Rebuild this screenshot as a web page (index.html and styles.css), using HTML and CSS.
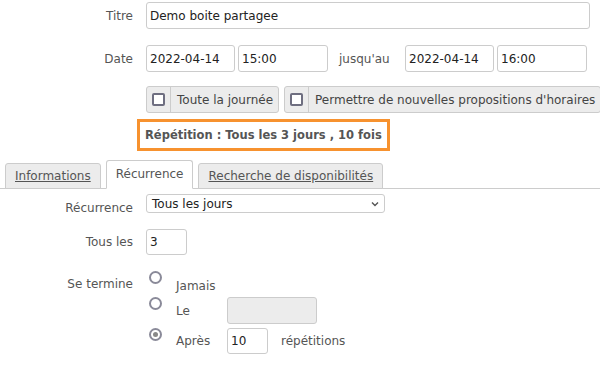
FILE: index.html
```html
<!DOCTYPE html>
<html lang="fr">
<head>
  <meta charset="UTF-8">
  <meta name="viewport" content="width=device-width, initial-scale=1.0">
  <title>Nouvel événement</title>
  <link rel="stylesheet" href="styles.css">
</head>
<body>
  <form class="event-form">
    <div class="row row-title">
      <label class="row-label" for="titre">Titre</label>
      <input class="field field-title" type="text" id="titre" value="Demo boite partagee">
    </div>

    <div class="row row-date">
      <label class="row-label">Date</label>
      <input class="field field-date" type="text" value="2022-04-14">
      <input class="field field-time" type="text" value="15:00">
      <span class="until">jusqu'au</span>
      <input class="field field-date" type="text" value="2022-04-14">
      <input class="field field-time" type="text" value="16:00">
    </div>

    <div class="row row-options">
      <span class="row-label"></span>
      <label class="check-btn">
        <span class="check-zone"><span class="check-square"></span></span>
        <span class="check-text">Toute la journée</span>
      </label>
      <label class="check-btn">
        <span class="check-zone"><span class="check-square"></span></span>
        <span class="check-text">Permettre de nouvelles propositions d'horaires</span>
      </label>
    </div>

    <div class="repeat-summary"><b>Répétition :</b> Tous les 3 jours , 10 fois</div>

    <ul class="tabs">
      <li class="tab"><a href="#">Informations</a></li>
      <li class="tab active"><span>Récurrence</span></li>
      <li class="tab"><a href="#">Recherche de disponibilités</a></li>
    </ul>

    <div class="tab-panel">
      <div class="row row-recurrence">
        <label class="row-label">Récurrence</label>
        <div class="select">
          <span>Tous les jours</span>
          <svg width="8" height="6" viewBox="0 0 8 6"><path d="M1 1.5 L4 4.5 L7 1.5" fill="none" stroke="#555" stroke-width="1.4"/></svg>
        </div>
      </div>

      <div class="row row-every">
        <label class="row-label">Tous les</label>
        <input class="field field-small" type="text" value="3">
      </div>

      <div class="row row-end">
        <label class="row-label">Se termine</label>
        <div class="end-options">
          <div class="end-option opt-never">
            <span class="radio"></span>
            <span class="opt-text">Jamais</span>
          </div>
          <div class="end-option opt-date">
            <span class="radio"></span>
            <span class="opt-text">Le</span>
            <input class="field field-disabled" type="text" disabled>
          </div>
          <div class="end-option opt-after">
            <span class="radio checked"></span>
            <span class="opt-text">Après</span>
            <input class="field field-small" type="text" value="10">
            <span class="opt-suffix">répétitions</span>
          </div>
        </div>
      </div>
    </div>
  </form>
</body>
</html>
```

FILE: styles.css
```css
body {
  margin: 0;
  font-family: 'DejaVu Sans', sans-serif;
  font-size: 12px;
  color: #555;
  background-color: #fff;
}

.row {
  display: flex;
  align-items: center;
}

.row-label {
  width: 133px;
  margin-right: 13px;
  text-align: right;
  flex-shrink: 0;
}

.field {
  box-sizing: border-box;
  height: 27px;
  padding: 0 3px;
  border: 1px solid #ccc;
  border-radius: 3px;
  font-family: inherit;
  font-size: 12px;
  color: #222;
  background-color: #fff;
  outline: none;
}

.row-title {
  margin-top: 2px;
}

.field-title {
  width: 444px;
}

.row-date {
  margin-top: 16px;
}

.field-date {
  width: 89px;
}

.field-time {
  width: 90px;
  margin-left: 3px;
}

.until {
  width: 66px;
  margin-left: 11px;
}

.row-options {
  margin-top: 14px;
}

.check-btn {
  display: flex;
  align-items: stretch;
  box-sizing: border-box;
  height: 27px;
  margin-right: 5px;
  border: 1px solid #ccc;
  border-radius: 3px;
  background-color: #ececec;
  color: #444;
  white-space: nowrap;
}

.check-zone {
  display: flex;
  align-items: center;
  justify-content: center;
  width: 23px;
  border-right: 1px solid #ccc;
}

.check-square {
  box-sizing: border-box;
  width: 13px;
  height: 13px;
  border: 2px solid #6e6e80;
  border-radius: 2px;
  background-color: #fff;
}

.check-text {
  display: flex;
  align-items: center;
  padding: 0 5px 0 6px;
}

.repeat-summary {
  box-sizing: border-box;
  width: fit-content;
  height: 32px;
  margin: 6px 0 0 137px;
  padding: 0 5px;
  border: 3px solid #f7922f;
  line-height: 26px;
  font-weight: bold;
  font-size: 11.5px;
  color: #555;
}

.repeat-summary b {
  font-weight: 900;
}

.tabs {
  display: flex;
  align-items: flex-end;
  list-style: none;
  margin: 9px 0 0;
  padding: 0 0 0 5px;
  border-bottom: 1px solid #ccc;
  height: 28px;
}

.tab {
  box-sizing: border-box;
  height: 26px;
  margin-right: 5px;
  margin-bottom: -1px;
  padding: 0 9px;
  border: 1px solid #ccc;
  border-radius: 3px 3px 0 0;
  background-color: #ececec;
  line-height: 24px;
  font-size: 12px;
}

.tab a {
  color: #555;
  text-decoration: underline;
}

.tab.active {
  height: 29px;
  background-color: #fff;
  border-bottom-color: #fff;
  line-height: 27px;
}

.row-recurrence {
  height: 19px;
  margin-top: 5px;
  align-items: flex-start;
}

.row-recurrence .row-label {
  padding-top: 7px;
}

.select {
  display: flex;
  align-items: center;
  justify-content: space-between;
  box-sizing: border-box;
  width: 239px;
  height: 19px;
  padding: 0 5px;
  border: 1px solid #ccc;
  border-radius: 3px;
  color: #222;
}

.row-every {
  margin-top: 16px;
}

.field-small {
  width: 41px;
}

.row-every .field-small {
  height: 26px;
}

.row-end {
  align-items: flex-start;
  margin-top: 17px;
}

.row-end .row-label {
  line-height: 24px;
}

.end-options {
  display: flex;
  flex-direction: column;
}

.end-option {
  display: flex;
  align-items: center;
}

.opt-never {
  height: 25px;
}

.opt-date {
  height: 27px;
}

.opt-after {
  height: 26px;
  margin-top: 4px;
}

.radio {
  box-sizing: border-box;
  width: 13px;
  height: 13px;
  margin: 0 14px 14px 3px;
  border: 2px solid #8a8a99;
  border-radius: 50%;
  display: flex;
  align-items: center;
  justify-content: center;
}

.radio.checked::after {
  content: "";
  width: 5px;
  height: 5px;
  border-radius: 50%;
  background-color: #888;
}

.opt-text {
  width: 51px;
}

.opt-never .opt-text {
  margin-top: 2px;
}

.field-disabled {
  width: 90px;
  background-color: #ececec;
}

.opt-after .field-small {
  height: 26px;
}

.opt-suffix {
  margin-left: 13px;
}
```
